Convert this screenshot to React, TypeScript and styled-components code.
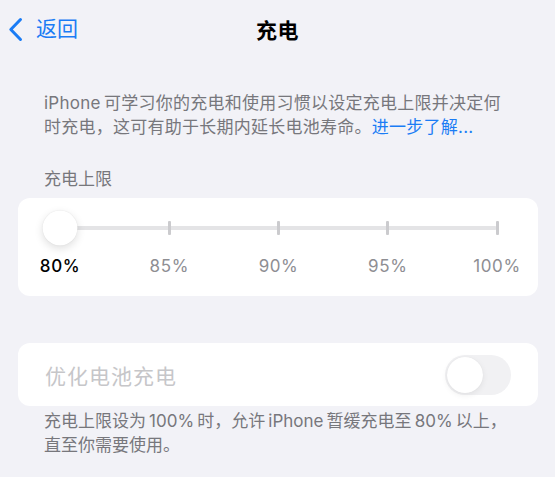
import React from 'react';
import styled, { createGlobalStyle } from 'styled-components';

const GlobalStyle = createGlobalStyle`
  html, body {
    margin: 0;
    padding: 0;
    background: #f2f2f7;
  }
  body {
    font-family: Inter, "Noto Sans CJK SC", sans-serif;
    -webkit-font-smoothing: antialiased;
  }
`;

const Screen = styled.div`
  width: 555px;
  height: 477px;
  overflow: hidden;
  background: #f2f2f7;
  display: flex;
  flex-direction: column;
`;

const NavBar = styled.div`
  height: 58px;
  display: grid;
  grid-template-columns: 1fr auto 1fr;
  align-items: center;
`;

const BackButton = styled.div`
  display: flex;
  align-items: center;
  gap: 13px;
  padding-left: 8px;
  color: #1a7cf5;
  font-size: 21px;
  line-height: 24px;
`;

const Title = styled.div`
  font-size: 21px;
  font-weight: 700;
  color: #000;
  letter-spacing: 0.5px;
`;

const Note = styled.p<{ $top: number; $spacing?: number }>`
  margin: ${(p) => p.$top}px 0 0;
  padding: 0 10px 0 44px;
  font-size: 17px;
  line-height: 24px;
  color: #77777c;
  letter-spacing: ${(p) => p.$spacing ?? 0}px;
  white-space: nowrap;
`;

const Link = styled.span`
  color: #1a7cf5;
`;

const SectionLabel = styled.div`
  margin: 28px 0 0;
  padding-left: 44px;
  font-size: 17px;
  line-height: 24px;
  color: #77777c;
`;

const Card = styled.div<{ $top: number; $height: number }>`
  margin: ${(p) => p.$top}px 17px 0 18px;
  height: ${(p) => p.$height}px;
  background: #fff;
  border-radius: 12px;
  box-sizing: border-box;
`;

const SliderBox = styled.div`
  padding: 28px 41px 0 42px;
`;

const Track = styled.div`
  position: relative;
  height: 4px;
  border-radius: 2px;
  background: #e4e4e6;
`;

const Tick = styled.div<{ $at: number }>`
  position: absolute;
  top: -5px;
  left: ${(p) => p.$at}%;
  width: 3px;
  height: 14px;
  margin-left: -1.5px;
  border-radius: 1px;
  background: #cbcbce;
`;

const Thumb = styled.div`
  position: absolute;
  left: 0;
  top: 2px;
  width: 35px;
  height: 35px;
  border-radius: 50%;
  background: #fff;
  transform: translate(-50%, -50%);
  box-shadow: 0 3px 8px rgba(0, 0, 0, 0.13), 0 0 1px rgba(0, 0, 0, 0.12);
`;

const Stops = styled.div`
  display: flex;
  justify-content: space-between;
  margin-top: 26px;
`;

const Stop = styled.div<{ $active?: boolean }>`
  width: 0;
  display: flex;
  justify-content: center;
  white-space: nowrap;
  font-size: 17px;
  line-height: 20px;
  letter-spacing: 0.6px;
  font-weight: ${(p) => (p.$active ? 500 : 400)};
  color: ${(p) => (p.$active ? '#000' : '#8e8e93')};
`;

const Row = styled.div`
  height: 100%;
  display: flex;
  align-items: center;
  justify-content: space-between;
  padding: 0 27px 0 27px;
`;

const RowLabel = styled.div`
  font-size: 21px;
  color: #c6c6c9;
  letter-spacing: 1px;
`;

const Switch = styled.div`
  position: relative;
  width: 66px;
  height: 40px;
  border-radius: 20px;
  background: #f1f1f3;
`;

const Knob = styled.div`
  position: absolute;
  left: 2px;
  top: 2px;
  width: 36px;
  height: 36px;
  border-radius: 50%;
  background: #fff;
  box-shadow: 0 2px 6px rgba(0, 0, 0, 0.07), 0 0 1px rgba(0, 0, 0, 0.08);
`;

const stops = ['80%', '85%', '90%', '95%', '100%'];

// thin space between Latin and CJK runs
const ts = '\u2009';

const Chevron = () => (
  <svg width="15" height="25" viewBox="0 0 15 25" fill="none">
    <path
      d="M12.5 2.5 L2.8 12.5 L12.5 22.5"
      stroke="#1a7cf5"
      strokeWidth="3"
      strokeLinecap="round"
      strokeLinejoin="round"
    />
  </svg>
);

export default function App() {
  return (
    <>
      <GlobalStyle />
      <Screen>
        <NavBar>
          <BackButton>
            <Chevron />
            <span>返回</span>
          </BackButton>
          <Title>充电</Title>
          <div />
        </NavBar>

        <Note $top={33} $spacing={0.25}>
          {`iPhone${ts}可学习你的充电和使用习惯以设定充电上限并决定何`}
          <br />
          时充电，这可有助于长期内延长电池寿命。<Link>进一步了解...</Link>
        </Note>

        <SectionLabel>充电上限</SectionLabel>
        <Card $top={7} $height={98}>
          <SliderBox>
            <Track>
              {[25, 50, 75, 100].map((at) => (
                <Tick key={at} $at={at} />
              ))}
              <Thumb />
            </Track>
            <Stops>
              {stops.map((s, i) => (
                <Stop key={s} $active={i === 0}>
                  {s}
                </Stop>
              ))}
            </Stops>
          </SliderBox>
        </Card>

        <Card $top={47} $height={63}>
          <Row>
            <RowLabel>优化电池充电</RowLabel>
            <Switch>
              <Knob />
            </Switch>
          </Row>
        </Card>

        <Note $top={3}>
          {`充电上限设为${ts}100%${ts}时，允许${ts}iPhone${ts}暂缓充电至${ts}80%${ts}以上，`}
          <br />
          直至你需要使用。
        </Note>
      </Screen>
    </>
  );
}
